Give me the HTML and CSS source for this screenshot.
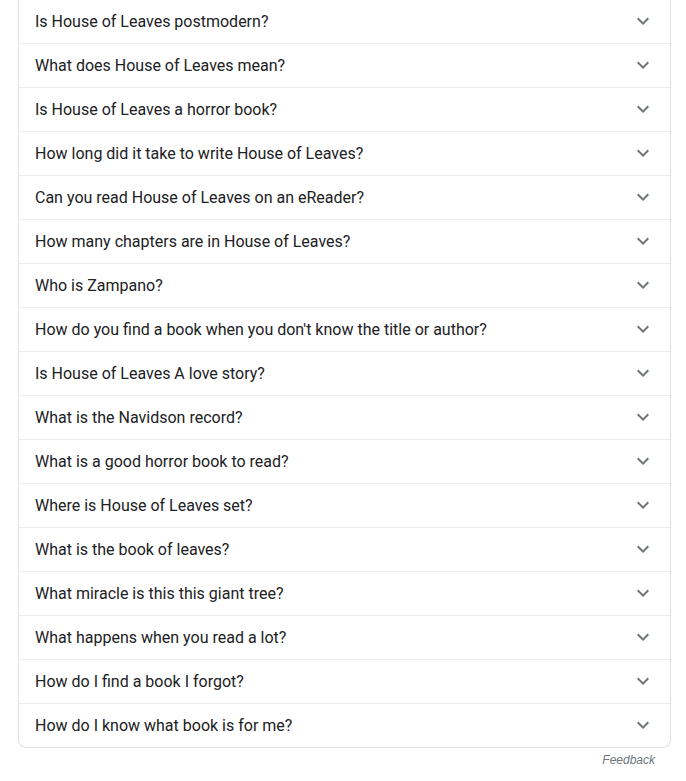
FILE: index.html
```html
<!DOCTYPE html>
<html>
<head>
<meta charset="utf-8">
<link rel="stylesheet" href="styles.css">
</head>
<body>
<div class="card">
  <div class="row"><span class="q">Is House of Leaves postmodern?</span><svg class="chev" viewBox="0 0 24 24"><path d="M7.41 8.59L12 13.17l4.59-4.58L18 10l-6 6-6-6 1.41-1.41z"/></svg></div>
  <div class="row"><span class="q">What does House of Leaves mean?</span><svg class="chev" viewBox="0 0 24 24"><path d="M7.41 8.59L12 13.17l4.59-4.58L18 10l-6 6-6-6 1.41-1.41z"/></svg></div>
  <div class="row"><span class="q">Is House of Leaves a horror book?</span><svg class="chev" viewBox="0 0 24 24"><path d="M7.41 8.59L12 13.17l4.59-4.58L18 10l-6 6-6-6 1.41-1.41z"/></svg></div>
  <div class="row"><span class="q">How long did it take to write House of Leaves?</span><svg class="chev" viewBox="0 0 24 24"><path d="M7.41 8.59L12 13.17l4.59-4.58L18 10l-6 6-6-6 1.41-1.41z"/></svg></div>
  <div class="row"><span class="q">Can you read House of Leaves on an eReader?</span><svg class="chev" viewBox="0 0 24 24"><path d="M7.41 8.59L12 13.17l4.59-4.58L18 10l-6 6-6-6 1.41-1.41z"/></svg></div>
  <div class="row"><span class="q">How many chapters are in House of Leaves?</span><svg class="chev" viewBox="0 0 24 24"><path d="M7.41 8.59L12 13.17l4.59-4.58L18 10l-6 6-6-6 1.41-1.41z"/></svg></div>
  <div class="row"><span class="q">Who is Zampano?</span><svg class="chev" viewBox="0 0 24 24"><path d="M7.41 8.59L12 13.17l4.59-4.58L18 10l-6 6-6-6 1.41-1.41z"/></svg></div>
  <div class="row"><span class="q">How do you find a book when you don't know the title or author?</span><svg class="chev" viewBox="0 0 24 24"><path d="M7.41 8.59L12 13.17l4.59-4.58L18 10l-6 6-6-6 1.41-1.41z"/></svg></div>
  <div class="row"><span class="q">Is House of Leaves A love story?</span><svg class="chev" viewBox="0 0 24 24"><path d="M7.41 8.59L12 13.17l4.59-4.58L18 10l-6 6-6-6 1.41-1.41z"/></svg></div>
  <div class="row"><span class="q">What is the Navidson record?</span><svg class="chev" viewBox="0 0 24 24"><path d="M7.41 8.59L12 13.17l4.59-4.58L18 10l-6 6-6-6 1.41-1.41z"/></svg></div>
  <div class="row"><span class="q">What is a good horror book to read?</span><svg class="chev" viewBox="0 0 24 24"><path d="M7.41 8.59L12 13.17l4.59-4.58L18 10l-6 6-6-6 1.41-1.41z"/></svg></div>
  <div class="row"><span class="q">Where is House of Leaves set?</span><svg class="chev" viewBox="0 0 24 24"><path d="M7.41 8.59L12 13.17l4.59-4.58L18 10l-6 6-6-6 1.41-1.41z"/></svg></div>
  <div class="row"><span class="q">What is the book of leaves?</span><svg class="chev" viewBox="0 0 24 24"><path d="M7.41 8.59L12 13.17l4.59-4.58L18 10l-6 6-6-6 1.41-1.41z"/></svg></div>
  <div class="row"><span class="q">What miracle is this this giant tree?</span><svg class="chev" viewBox="0 0 24 24"><path d="M7.41 8.59L12 13.17l4.59-4.58L18 10l-6 6-6-6 1.41-1.41z"/></svg></div>
  <div class="row"><span class="q">What happens when you read a lot?</span><svg class="chev" viewBox="0 0 24 24"><path d="M7.41 8.59L12 13.17l4.59-4.58L18 10l-6 6-6-6 1.41-1.41z"/></svg></div>
  <div class="row"><span class="q">How do I find a book I forgot?</span><svg class="chev" viewBox="0 0 24 24"><path d="M7.41 8.59L12 13.17l4.59-4.58L18 10l-6 6-6-6 1.41-1.41z"/></svg></div>
  <div class="row"><span class="q">How do I know what book is for me?</span><svg class="chev" viewBox="0 0 24 24"><path d="M7.41 8.59L12 13.17l4.59-4.58L18 10l-6 6-6-6 1.41-1.41z"/></svg></div>
</div>
<div class="footer"><span class="feedback">Feedback</span></div>
</body>
</html>
```
FILE: styles.css
```css
html, body {
  margin: 0;
  padding: 0;
  background: #fff;
}
body {
  font-family: Roboto, "Liberation Sans", Arial, sans-serif;
  color: #202124;
  width: 686px;
}
.card {
  margin-left: 18px;
  width: 651px;
  border: 1px solid #dfe1e5;
  border-top: none;
  border-radius: 0 0 8px 8px;
}
.row {
  height: 43px;
  display: flex;
  align-items: center;
  justify-content: space-between;
  padding: 0 16px;
  border-bottom: 1px solid #ebebeb;
}
.row:last-child {
  border-bottom: none;
}
.q {
  font-size: 16px;
  line-height: 20px;
}
.chev {
  width: 24px;
  height: 24px;
  fill: #70757a;
  margin-right: -1px;
  margin-bottom: 2px;
}
.footer {
  display: flex;
  justify-content: flex-end;
  padding-right: 31px;
  margin-top: 4px;
}
.feedback {
  font-family: "Liberation Sans", Arial, sans-serif;
  font-style: italic;
  font-size: 12px;
  line-height: 16px;
  color: #70757a;
}
```
